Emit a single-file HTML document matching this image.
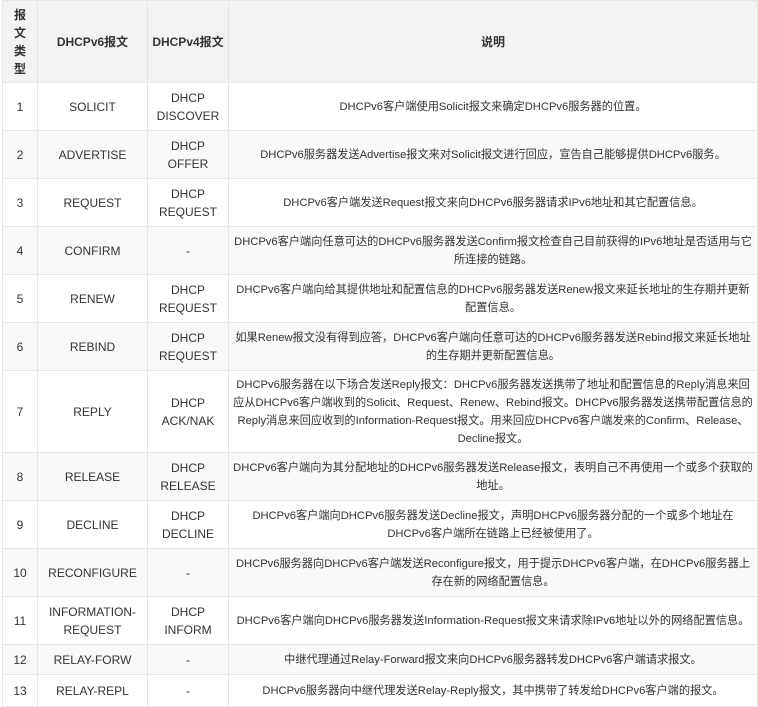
<!DOCTYPE html>
<html><head><meta charset="utf-8"><style>
html,body{margin:0;padding:0;background:#fff;width:758px;height:707px;overflow:hidden}
table{position:absolute;left:2px;top:0;border-collapse:collapse;table-layout:fixed;width:755px;font-family:"Liberation Sans","Noto Sans CJK SC",sans-serif;font-size:12px;color:#333;line-height:18px}
td,th{border:1px solid #e6e6e6;text-align:center;vertical-align:middle;padding:0 2px;white-space:nowrap;overflow:hidden}
th{background:#f2f3f5;font-weight:bold;color:#333}
tr.g td{background:#f9f9f9}
td.d{padding:0 2px;font-size:11.2px}
</style></head><body>
<table>
<colgroup><col style="width:35px"><col style="width:110px"><col style="width:81px"><col style="width:529px"></colgroup>
<tr style="height:82px"><th>报<br>文<br>类<br>型</th><th>DHCPv6报文</th><th>DHCPv4报文</th><th>说明</th></tr>
<tr style="height:48px"><td>1</td><td>SOLICIT</td><td>DHCP<br>DISCOVER</td><td class="d">DHCPv6客户端使用Solicit报文来确定DHCPv6服务器的位置。</td></tr>
<tr class="g" style="height:48px"><td>2</td><td>ADVERTISE</td><td>DHCP<br>OFFER</td><td class="d">DHCPv6服务器发送Advertise报文来对Solicit报文进行回应，宣告自己能够提供DHCPv6服务。</td></tr>
<tr style="height:48px"><td>3</td><td>REQUEST</td><td>DHCP<br>REQUEST</td><td class="d">DHCPv6客户端发送Request报文来向DHCPv6服务器请求IPv6地址和其它配置信息。</td></tr>
<tr class="g" style="height:48px"><td>4</td><td>CONFIRM</td><td>-</td><td class="d">DHCPv6客户端向任意可达的DHCPv6服务器发送Confirm报文检查自己目前获得的IPv6地址是否适用与它<br>所连接的链路。</td></tr>
<tr style="height:48px"><td>5</td><td>RENEW</td><td>DHCP<br>REQUEST</td><td class="d">DHCPv6客户端向给其提供地址和配置信息的DHCPv6服务器发送Renew报文来延长地址的生存期并更新<br>配置信息。</td></tr>
<tr class="g" style="height:48px"><td>6</td><td>REBIND</td><td>DHCP<br>REQUEST</td><td class="d">如果Renew报文没有得到应答，DHCPv6客户端向任意可达的DHCPv6服务器发送Rebind报文来延长地址<br>的生存期并更新配置信息。</td></tr>
<tr style="height:82px"><td>7</td><td>REPLY</td><td>DHCP<br>ACK/NAK</td><td class="d">DHCPv6服务器在以下场合发送Reply报文：DHCPv6服务器发送携带了地址和配置信息的Reply消息来回<br>应从DHCPv6客户端收到的Solicit、Request、Renew、Rebind报文。DHCPv6服务器发送携带配置信息的<br>Reply消息来回应收到的Information-Request报文。用来回应DHCPv6客户端发来的Confirm、Release、<br>Decline报文。</td></tr>
<tr class="g" style="height:48px"><td>8</td><td>RELEASE</td><td>DHCP<br>RELEASE</td><td class="d">DHCPv6客户端向为其分配地址的DHCPv6服务器发送Release报文，表明自己不再使用一个或多个获取的<br>地址。</td></tr>
<tr style="height:48px"><td>9</td><td>DECLINE</td><td>DHCP<br>DECLINE</td><td class="d">DHCPv6客户端向DHCPv6服务器发送Decline报文，声明DHCPv6服务器分配的一个或多个地址在<br>DHCPv6客户端所在链路上已经被使用了。</td></tr>
<tr class="g" style="height:48px"><td>10</td><td>RECONFIGURE</td><td>-</td><td class="d">DHCPv6服务器向DHCPv6客户端发送Reconfigure报文，用于提示DHCPv6客户端，在DHCPv6服务器上<br>存在新的网络配置信息。</td></tr>
<tr style="height:48px"><td>11</td><td>INFORMATION-<br>REQUEST</td><td>DHCP<br>INFORM</td><td class="d">DHCPv6客户端向DHCPv6服务器发送Information-Request报文来请求除IPv6地址以外的网络配置信息。</td></tr>
<tr class="g" style="height:30px"><td>12</td><td>RELAY-FORW</td><td>-</td><td class="d">中继代理通过Relay-Forward报文来向DHCPv6服务器转发DHCPv6客户端请求报文。</td></tr>
<tr style="height:32px"><td>13</td><td>RELAY-REPL</td><td>-</td><td class="d">DHCPv6服务器向中继代理发送Relay-Reply报文，其中携带了转发给DHCPv6客户端的报文。</td></tr>
</table>
</body></html>
